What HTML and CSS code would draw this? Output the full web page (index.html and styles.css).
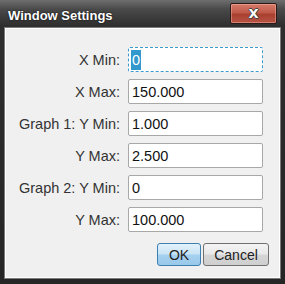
FILE: index.html
```html
<!DOCTYPE html>
<html lang="en">
<head>
    <meta charset="UTF-8">
    <title>Window Settings</title>
    <link rel="stylesheet" href="styles.css">
</head>
<body>
    <div class="dialog">
        <div class="titlebar">
            <span class="title">Window Settings</span>
            <button class="close">X</button>
        </div>

        <!-- fields -->
        <div class="panel">
            <div class="fields">
                <label>X Min:</label>
                <div class="field focus"><span class="sel">0</span></div>
                <label>X Max:</label>
                <div class="field">150.000</div>
                <label>Graph 1: Y Min:</label>
                <div class="field">1.000</div>
                <label>Y Max:</label>
                <div class="field">2.500</div>
                <label>Graph 2: Y Min:</label>
                <div class="field">0</div>
                <label>Y Max:</label>
                <div class="field">100.000</div>
            </div>
            <div class="buttons">
                <button class="btn ok">OK</button>
                <button class="btn">Cancel</button>
            </div>
        </div>
    </div>
</body>
</html>
```

FILE: styles.css
```css
html, body {
    margin: 0;
    padding: 0;
    height: 100%;
}
body {
    background: #262626;
    font-family: 'Liberation Sans', Arial, sans-serif;
}
.dialog {
    width: 285px;
    height: 284px;
    background: linear-gradient(to bottom, #6e6e6e 0px, #4a4a4a 9px, #2e2e2e 26px, #262626 100%);
}
.titlebar {
    height: 28px;
    display: flex;
    align-items: center;
    justify-content: space-between;
    padding: 0 8px 0 8px;
    box-sizing: border-box;
}
.title {
    color: #fff;
    font-weight: bold;
    font-size: 13px;
    text-shadow: 0 0 2px #000;
    padding-top: 2px;
}
.close {
    width: 47px;
    height: 21px;
    margin-top: -2px;
    border: 1px solid #2a1a18;
    border-radius: 2px;
    background: linear-gradient(to bottom, #d87a6a 0%, #c05a48 45%, #a8402f 55%, #b85445 100%);
    box-shadow: inset 0 0 0 1px rgba(255, 200, 190, 0.4);
    color: #fff;
    font-family: 'DejaVu Sans', sans-serif;
    font-size: 13px;
    font-weight: bold;
    padding: 0;
    text-shadow: 1px 0 0 #444, -1px 0 0 #444, 0 1px 0 #444, 0 -1px 0 #444;
}
.panel {
    margin: 0 5px;
    height: 250px;
    box-sizing: border-box;
    background: #f0f0f0;
    border: 1px solid #fff;
    box-shadow: 0 0 0 1px #7a7a7a;
    padding: 18px 10px 0 0;
}
.fields {
    display: grid;
    grid-template-columns: 114px 135px;
    column-gap: 8px;
    row-gap: 7px;
    justify-content: end;
    margin-right: 6px;
    align-items: center;
}
label {
    text-align: right;
    font-size: 14.5px;
    color: #333;
}
.field {
    height: 25px;
    box-sizing: border-box;
    background: #fff;
    border: 1px solid #a8a8a8;
    border-radius: 2px;
    font-size: 14.5px;
    color: #111;
    padding: 4px 3px 0;
    line-height: 16px;
}
.field.focus {
    border: 1px dashed #3a9ad0;
    padding: 2px 2px 0;
}
.sel {
    display: inline-block;
    background: #3399cc;
    color: #fff;
    height: 20px;
    line-height: 20px;
    padding: 0 1px;
}
.buttons {
    display: flex;
    justify-content: flex-end;
    gap: 2px;
    margin-top: 11px;
}
.btn {
    height: 23px;
    font-family: 'Liberation Sans', Arial, sans-serif;
    font-size: 14px;
    color: #222;
    border: 1px solid #707070;
    border-radius: 3px;
    background: linear-gradient(to bottom, #f4f4f4 0%, #e8e8e8 48%, #d6d6d6 52%, #cfcfcf 100%);
    padding: 0 7px;
    width: 66px;
}
.btn.ok {
    width: 44px;
    border-color: #3c7fb1;
    background: linear-gradient(to bottom, #e4f2fb 0%, #c8e4f6 48%, #a6d1ef 52%, #98c8ea 100%);
}
```
